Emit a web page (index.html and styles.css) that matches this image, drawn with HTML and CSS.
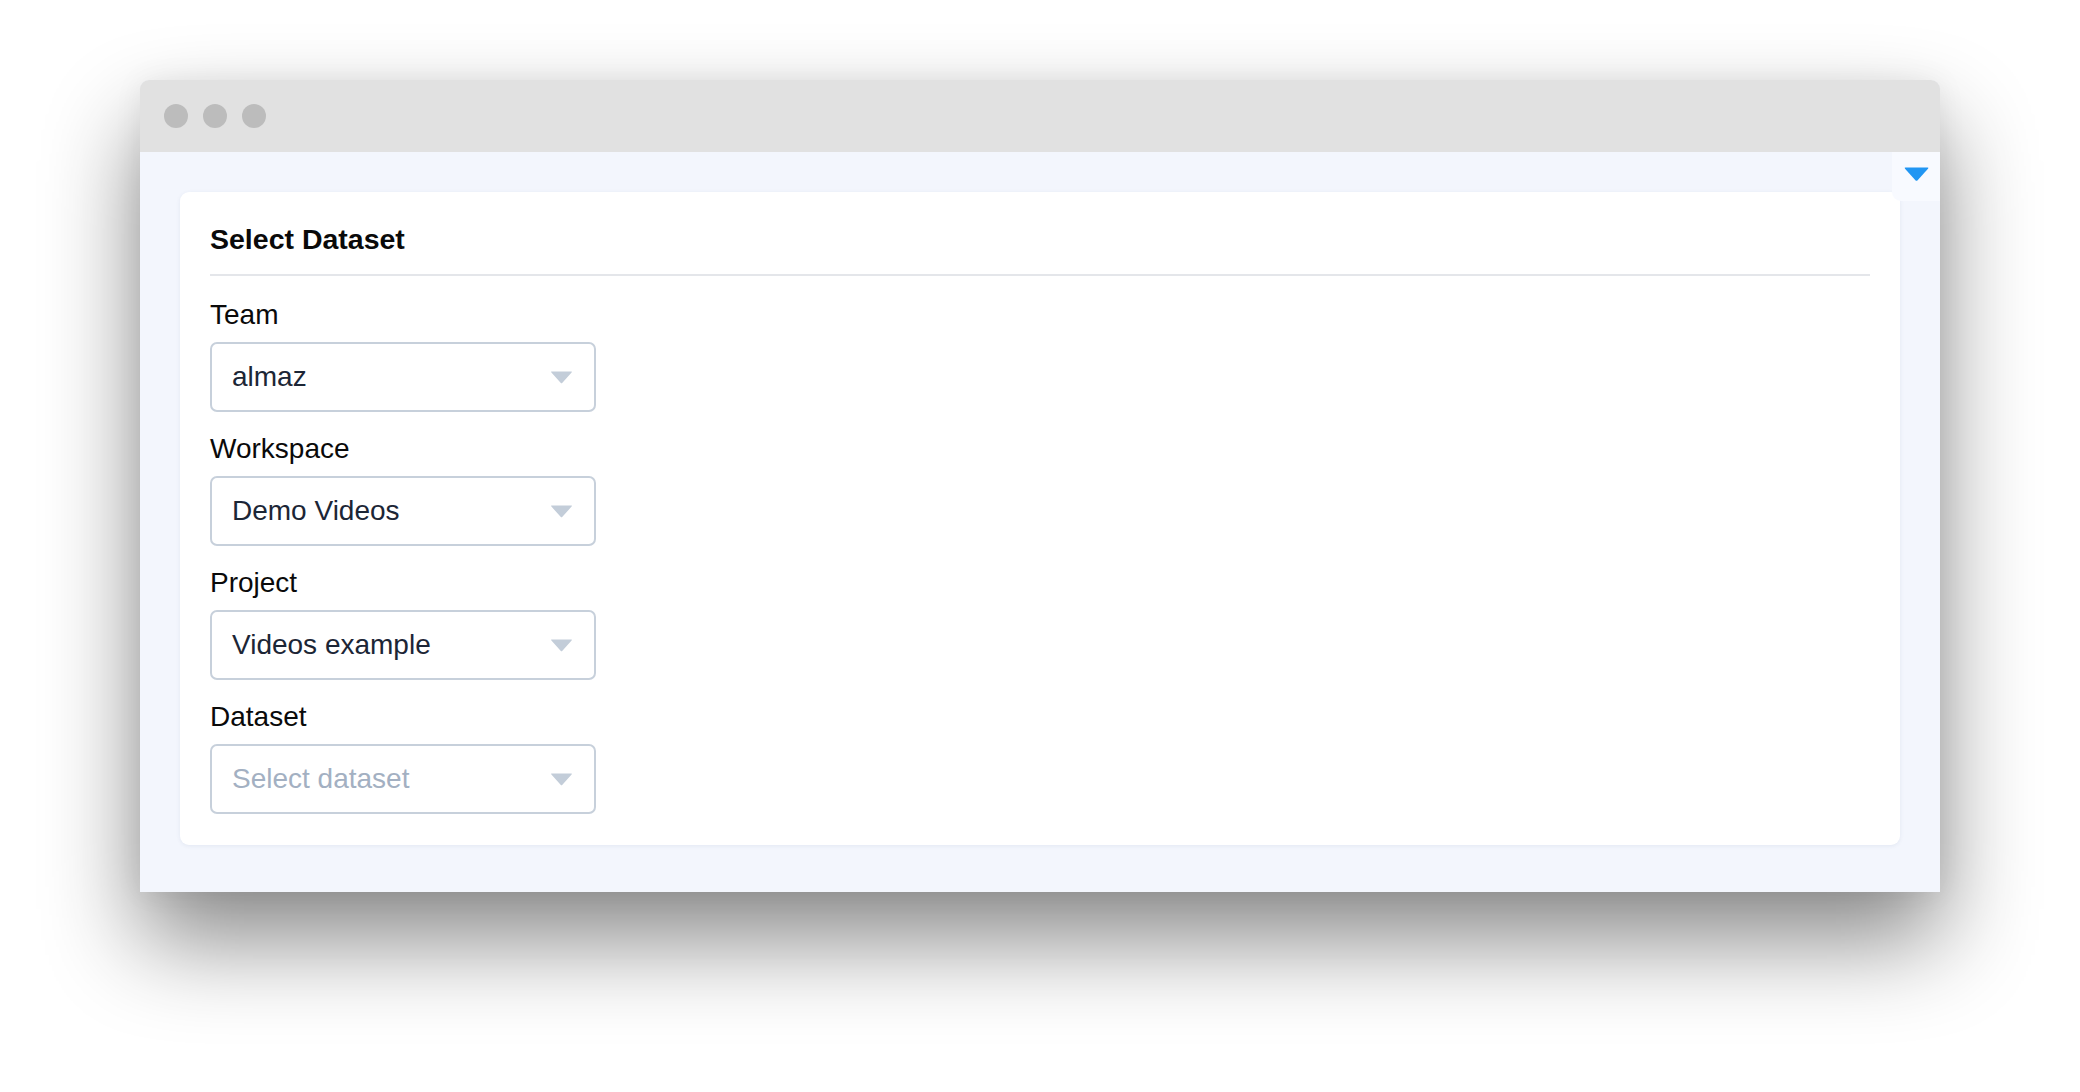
FILE: index.html
```html
<!DOCTYPE html>
<html lang="en">
<head>
<meta charset="utf-8">
<title>Select Dataset</title>
<link rel="stylesheet" href="styles.css">
</head>
<body>
<div class="stage">
  <div class="window">
    <div class="titlebar">
      <span class="dot"></span>
      <span class="dot"></span>
      <span class="dot"></span>
    </div>
    <div class="content">
      <div class="corner-toggle">
        <svg width="27" height="16" viewBox="0 0 27 16"><path d="M2.5 1.5 H24.5 Q26 1.5 25 2.8 L14.6 14.2 Q13.5 15.4 12.4 14.2 L2 2.8 Q1 1.5 2.5 1.5 Z" fill="#2196f3"/></svg>
      </div>
      <div class="card">
        <h2 class="card-title">Select Dataset</h2>
        <div class="divider"></div>
        <div class="field">
          <div class="label">Team</div>
          <div class="select"><span class="value">almaz</span><span class="arrow"><svg width="23" height="13" viewBox="0 0 23 13"><path d="M1.8 0.5 H21.2 Q22.6 0.5 21.6 1.6 L12.4 11.8 Q11.5 12.8 10.6 11.8 L1.4 1.6 Q0.4 0.5 1.8 0.5 Z" fill="#c3cdd9"/></svg></span></div>
        </div>
        <div class="field">
          <div class="label">Workspace</div>
          <div class="select"><span class="value">Demo Videos</span><span class="arrow"><svg width="23" height="13" viewBox="0 0 23 13"><path d="M1.8 0.5 H21.2 Q22.6 0.5 21.6 1.6 L12.4 11.8 Q11.5 12.8 10.6 11.8 L1.4 1.6 Q0.4 0.5 1.8 0.5 Z" fill="#c3cdd9"/></svg></span></div>
        </div>
        <div class="field">
          <div class="label">Project</div>
          <div class="select"><span class="value">Videos example</span><span class="arrow"><svg width="23" height="13" viewBox="0 0 23 13"><path d="M1.8 0.5 H21.2 Q22.6 0.5 21.6 1.6 L12.4 11.8 Q11.5 12.8 10.6 11.8 L1.4 1.6 Q0.4 0.5 1.8 0.5 Z" fill="#c3cdd9"/></svg></span></div>
        </div>
        <div class="field">
          <div class="label">Dataset</div>
          <div class="select"><span class="value placeholder">Select dataset</span><span class="arrow"><svg width="23" height="13" viewBox="0 0 23 13"><path d="M1.8 0.5 H21.2 Q22.6 0.5 21.6 1.6 L12.4 11.8 Q11.5 12.8 10.6 11.8 L1.4 1.6 Q0.4 0.5 1.8 0.5 Z" fill="#c3cdd9"/></svg></span></div>
        </div>
      </div>
    </div>
  </div>
</div>
</body>
</html>
```

FILE: styles.css
```css
* { box-sizing: border-box; }

html, body {
  margin: 0;
  padding: 0;
  background: #ffffff;
}

body {
  font-family: "Liberation Sans", Arial, Helvetica, sans-serif;
  width: 2080px;
  height: 1092px;
  overflow: hidden;
}

.stage {
  padding: 80px 140px 0 140px;
}

.window {
  width: 1800px;
  border-radius: 9px 9px 0 0;
  background: #f3f6fd;
  box-shadow: 0 48px 95px rgba(0, 0, 0, 0.47), 0 0 30px rgba(0, 0, 0, 0.06);
}

.titlebar {
  height: 72px;
  background: #e1e1e1;
  border-radius: 9px 9px 0 0;
  display: flex;
  align-items: center;
  gap: 15px;
  padding-left: 24px;
}

.dot {
  width: 24px;
  height: 24px;
  border-radius: 50%;
  background: #bcbcbc;
}

.content {
  position: relative;
  height: 740px;
  padding: 40px;
}

.corner-toggle {
  position: absolute;
  top: 0;
  right: 0;
  width: 48px;
  height: 49px;
  background: #f8faff;
  border-radius: 0 0 0 9px;
  display: flex;
  justify-content: center;
  padding-top: 14px;
  z-index: 2;
}

.card {
  background: #ffffff;
  border-radius: 9px;
  box-shadow: 0 1px 4px rgba(40, 60, 110, 0.08);
  padding: 31px 30px 31px 30px;
  height: 653px;
}

.card-title {
  margin: 0;
  font-size: 28.5px;
  line-height: 32px;
  font-weight: 700;
  color: #0a0a0a;
}

.divider {
  height: 2px;
  background: #e4e6ea;
  margin-top: 19px;
  margin-bottom: 24px;
}

.field {
  margin-bottom: 22px;
}

.field:last-child {
  margin-bottom: 0;
}

.label {
  font-size: 28px;
  line-height: 30px;
  color: #0a0a0a;
  margin-bottom: 12px;
}

.select {
  width: 386px;
  height: 70px;
  border: 2px solid #c7d0db;
  border-radius: 7px;
  display: flex;
  align-items: center;
  justify-content: space-between;
  padding: 0 21px 0 20px;
}

.value {
  font-size: 28px;
  line-height: 32px;
  color: #1c2636;
}

.value.placeholder {
  color: #a3b0c2;
}

.arrow {
  display: flex;
  align-items: center;
  height: 13px;
  margin-top: 1px;
}
```
